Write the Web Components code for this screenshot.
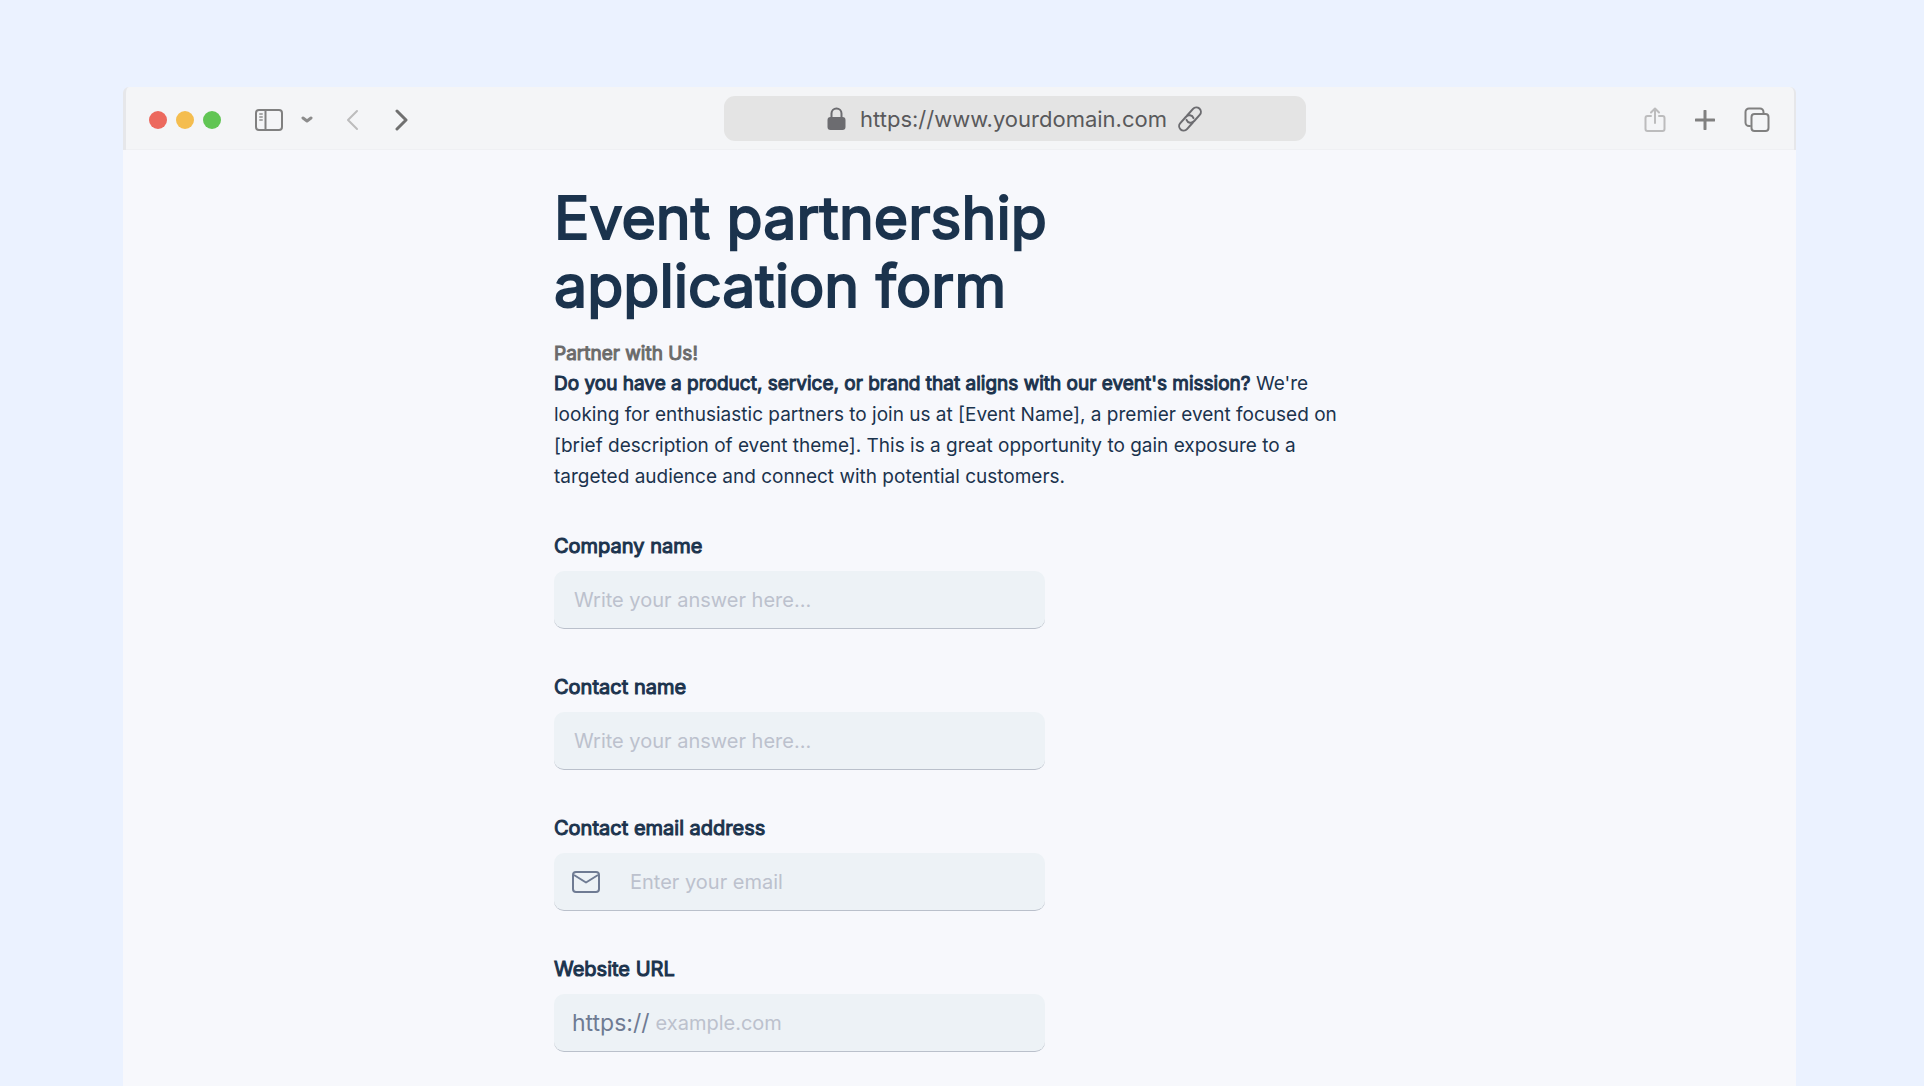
<!DOCTYPE html>
<html lang="en">
<head>
<meta charset="utf-8">
<meta name="viewport" content="width=device-width, initial-scale=1">
<title>Event partnership application form</title>
<style>
    body {
        margin: 0;
        background: #ebf2ff;
        color: #1b334d;
        font-family: Inter, "Liberation Sans", sans-serif;
        overflow: hidden;
    }
</style>
</head>
<body>

<browser-window>
    <browser-toolbar slot="toolbar" url="https://www.yourdomain.com"></browser-toolbar>
    <form-page>
        <form-intro heading="Event partnership application form" tagline="Partner with Us!">
            <strong>Do you have a product, service, or brand that aligns with our event's mission?</strong>
            We're looking for enthusiastic partners to join us at [Event Name], a premier event focused on
            [brief description of event theme]. This is a great opportunity to gain exposure to a targeted
            audience and connect with potential customers.
        </form-intro>
        <form-field label="Company name" placeholder="Write your answer here..."></form-field>
        <form-field label="Contact name" placeholder="Write your answer here..."></form-field>
        <form-field label="Contact email address" type="email" placeholder="Enter your email">
            <svg slot="prefix" width="28" height="22" viewBox="0 0 28 22" fill="none" stroke="#6f7b93" stroke-width="2" stroke-linejoin="round">
                <rect x="1" y="1" width="26" height="20" rx="3"/>
                <path d="M2 4l12 7.500L26 4"/>
            </svg>
        </form-field>
        <form-field label="Website URL" type="url" placeholder="example.com">
            <span slot="prefix">https://</span>
        </form-field>
    </form-page>
</browser-window>

<script>
// Outer window frame, toolbar on top and page under it
class BrowserWindow extends HTMLElement {
    constructor() {
        super();
        this.attachShadow({ mode: "open" });
    }

    connectedCallback() {
        this.shadowRoot.innerHTML = `
            <style>
                :host {
                    display: flex;
                    flex-direction: column;
                    box-sizing: border-box;
                    min-height: 100vh;
                    padding: 87px 128px 0 123px;
                }

                main {
                    flex: 1;
                    background: #f7f8fc;
                }
            </style>

            <slot name="toolbar"></slot>
            <main><slot></slot></main>
        `;
    }
}

class BrowserToolbar extends HTMLElement {
    constructor() {
        super();
        this.attachShadow({ mode: "open" });
    }

    connectedCallback() {
        const url = this.getAttribute("url");

        this.shadowRoot.innerHTML = `
            <style>
                :host {
                    display: grid;
                    grid-template-columns: 598fr 582fr 488fr;
                    align-items: center;
                    box-sizing: border-box;
                    height: 63px;
                    background: #f4f5f7;
                    border: solid #e6e7ea;
                    border-width: 0 2px 0 3px;
                    box-shadow: inset 0 -1px #eff0f3;
                    border-radius: 6px 6px 0 0;
                }

                .left, .right {
                    display: flex;
                    align-items: center;
                    padding-top: 2px;
                }

                .left {
                    padding-left: 23px;
                }

                .right {
                    justify-content: flex-end;
                    gap: 29px;
                    padding-right: 24px;
                }

                .lights {
                    display: flex;
                    gap: 9px;
                    margin-right: 34px;
                }

                .lights i {
                    width: 18px;
                    height: 18px;
                    border-radius: 50%;
                }

                .red { background: #ec695e; }
                .yellow { background: #f4bd4f; }
                .green { background: #61c554; }

                button {
                    display: flex;
                    padding: 0;
                    border: 0;
                    background: none;
                }

                svg {
                    fill: none;
                    stroke: #808080;
                    stroke-width: 2;
                    stroke-linecap: round;
                    stroke-linejoin: round;
                }

                .menu { margin: 0 32px 0 18px; }
                .menu svg { stroke: #8c8c8c; stroke-width: 3; }
                .back { margin-right: 36px; }
                .back svg, .share svg { stroke: #bcbcbd; }
                .forward svg { stroke: #707070; stroke-width: 3; }

                .address {
                    display: flex;
                    align-items: center;
                    justify-content: center;
                    gap: 10px;
                    height: 45px;
                    border-radius: 11px;
                    background: #e4e4e4;
                    color: #59595b;
                    font-size: 22px;
                    text-decoration: none;
                }

                .address svg { stroke: #6c6c70; }
                .address svg:first-child { margin-right: 4px; }
            </style>

            <div class="left">
                <div class="lights"><i class="red"></i><i class="yellow"></i><i class="green"></i></div>
                <button type="button" aria-label="Show sidebar">
                    <svg width="28" height="22" viewBox="0 0 28 22">
                        <rect x="1" y="1" width="26" height="20" rx="3"/>
                        <path d="M10.500 1v20"/>
                        <path d="M5 5h2M5 8h2M5 11h2" stroke="#a8a8a8"/>
                    </svg>
                </button>
                <button type="button" class="menu" aria-label="Sidebar menu">
                    <svg width="12" height="8" viewBox="0 0 12 8"><path d="M2 2l4 3 4-3"/></svg>
                </button>
                <button type="button" class="back" aria-label="Back">
                    <svg width="14" height="22" viewBox="0 0 14 22"><path d="M12 2L3 11l9 9"/></svg>
                </button>
                <button type="button" class="forward" aria-label="Forward">
                    <svg width="14" height="22" viewBox="0 0 14 22"><path d="M2 2l9 9-9 9"/></svg>
                </button>
            </div>

            <a class="address" href="#">
                <svg width="19" height="24" viewBox="0 0 19 24">
                    <path d="M4.500 11V6.500a5 5 0 0 1 10 0V11"/>
                    <rect x="1.500" y="11" width="16" height="11" rx="2" fill="#6c6c70"/>
                </svg>
                <span>${url}</span>
                <svg width="26" height="26" viewBox="0 0 26 26">
                    <g transform="rotate(-48 13 13)">
                        <path d="M12 17.500H3.500a4.500 4.500 0 0 1 0-9H12a4.500 4.500 0 0 1 4 6.500"/>
                        <path d="M14 8.500h8.500a4.500 4.500 0 0 1 0 9H14a4.500 4.500 0 0 1-4-6.500"/>
                    </g>
                </svg>
            </a>

            <div class="right">
                <button type="button" class="share" aria-label="Share">
                    <svg width="22" height="26" viewBox="0 0 22 26">
                        <path d="M7 9H3.500a2 2 0 0 0-2 2v11a2 2 0 0 0 2 2h15a2 2 0 0 0 2-2V11a2 2 0 0 0-2-2H15"/>
                        <path d="M11 16V2M7 5.500L11 1.500l4 4"/>
                    </svg>
                </button>
                <button type="button" aria-label="New tab">
                    <svg width="20" height="20" viewBox="0 0 20 20"><path d="M10 1v18M1 10h18" stroke-width="3"/></svg>
                </button>
                <button type="button" aria-label="Show tabs">
                    <svg width="26" height="26" viewBox="0 0 26 26">
                        <path d="M6 19H5a3.500 3.500 0 0 1-3.500-3.500V5A3.500 3.500 0 0 1 5 1.500h11A3.500 3.500 0 0 1 19.500 5v2"/>
                        <rect x="7.500" y="7" width="17" height="17" rx="3"/>
                    </svg>
                </button>
            </div>
        `;
    }
}

class FormPage extends HTMLElement {
    constructor() {
        super();
        this.attachShadow({ mode: "open" });
    }

    connectedCallback() {
        this.shadowRoot.innerHTML = `
            <style>
                :host {
                    display: block;
                    padding: 34px 24px 0;
                }

                form {
                    max-width: 811px;
                    margin: 0 auto;
                }
            </style>

            <form><slot></slot></form>
        `;
    }
}

class FormIntro extends HTMLElement {
    constructor() {
        super();
        this.attachShadow({ mode: "open" });
    }

    connectedCallback() {
        this.shadowRoot.innerHTML = `
            <style>
                :host {
                    display: block;
                    margin-bottom: 42px;
                }

                h1 {
                    max-width: 600px;
                    margin: 0 0 20px;
                    font-size: 59px;
                    font-weight: 400;
                    line-height: 68px;
                    -webkit-text-stroke: 2px;
                }

                h2 {
                    margin: 0;
                    color: #6b6b6b;
                    font-size: 19px;
                    font-weight: 400;
                    line-height: 28px;
                    -webkit-text-stroke: 1px;
                }

                p {
                    margin: 0;
                    font-size: 19px;
                    line-height: 31px;
                }

                ::slotted(strong) {
                    font-weight: 400;
                    -webkit-text-stroke: 1px;
                }
            </style>

            <h1>${this.getAttribute("heading")}</h1>
            <h2>${this.getAttribute("tagline")}</h2>
            <p><slot></slot></p>
        `;
    }
}

// Label with a text box, anything in the prefix slot goes before the text
class FormField extends HTMLElement {
    constructor() {
        super();
        this.attachShadow({ mode: "open" });
    }

    connectedCallback() {
        const type = this.getAttribute("type") || "text";

        this.shadowRoot.innerHTML = `
            <style>
                :host {
                    display: block;
                    max-width: 491px;
                    margin-bottom: 46px;
                }

                label {
                    display: block;
                    margin-bottom: 13px;
                    font-size: 20px;
                    line-height: 24px;
                    -webkit-text-stroke: 1px;
                }

                .box {
                    display: flex;
                    align-items: center;
                    box-sizing: border-box;
                    height: 58px;
                    padding: 1px 18px 0;
                    border-bottom: 1px solid #bac0cb;
                    border-radius: 10px;
                    background: #edf2f6;
                    color: #6f7b93;
                    font-size: 23px;
                }

                ::slotted(svg) {
                    margin-right: 28px;
                }

                ::slotted(span) {
                    margin-right: 4px;
                }

                input {
                    flex: 1;
                    min-width: 0;
                    padding: 0 0 0 2px;
                    border: 0;
                    outline: 0;
                    background: none;
                    color: #1b334d;
                    font-family: inherit;
                    font-size: 20px;
                }

                input::placeholder {
                    color: #bcc1cd;
                }
            </style>

            <label for="answer">${this.getAttribute("label")}</label>
            <div class="box">
                <slot name="prefix"></slot>
                <input id="answer" type="${type}" placeholder="${this.getAttribute("placeholder")}">
            </div>
        `;
    }
}

customElements.define("browser-window", BrowserWindow);
customElements.define("browser-toolbar", BrowserToolbar);
customElements.define("form-page", FormPage);
customElements.define("form-intro", FormIntro);
customElements.define("form-field", FormField);
</script>
</body>
</html>
